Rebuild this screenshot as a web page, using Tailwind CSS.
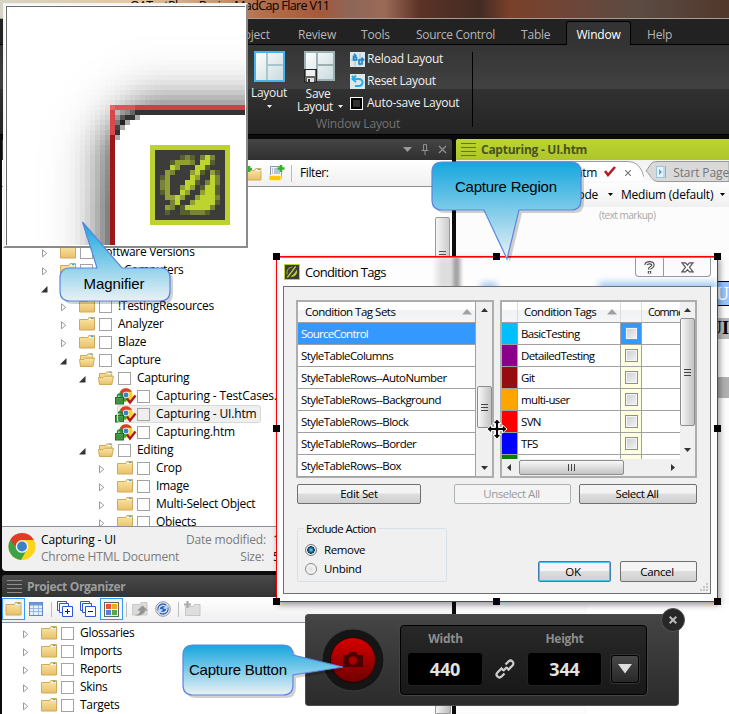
<!DOCTYPE html>
<html lang="en">
<head>
<meta charset="utf-8">
<title>MadCap Flare V11</title>
<script src="https://cdn.jsdelivr.net/npm/@tailwindcss/browser@4"></script>
</head>
<body class="relative w-[729px] h-[714px] overflow-hidden bg-[#0c0c0c] font-['Open_Sans','Noto_Sans',sans-serif] text-[12px] leading-[18px] tracking-[-0.3px] text-black">

<svg width="0" height="0" class="absolute">
  <defs>
    <linearGradient id="fg" x1="0" y1="0" x2="0" y2="1"><stop offset="0" stop-color="#fbe7a8"/><stop offset="1" stop-color="#e8c069"/></linearGradient>
    <linearGradient id="callout" x1="0" y1="0" x2="0" y2="1"><stop offset="0" stop-color="#14a6dd"/><stop offset="1" stop-color="#eaf1f5"/></linearGradient>
    <linearGradient id="red" x1="0" y1="0" x2="0" y2="1"><stop offset="0" stop-color="#d80000"/><stop offset="1" stop-color="#6e0000"/></linearGradient>
    <linearGradient id="glass" x1="0" y1="0" x2="1" y2="1"><stop offset="0" stop-color="#fff"/><stop offset="1" stop-color="#c9dadd"/></linearGradient>
    <symbol id="folder" viewBox="0 0 16 14"><path d="M.5 13V2.500h8.200l1.200-2h5.600V13z" fill="url(#fg)" stroke="#d0a95c"/><path d="M10 2.500h5" stroke="#fff"/><path d="M12 1.600h2.500" stroke="#35a8e8" stroke-width="1.200"/></symbol>
    <symbol id="open" viewBox="0 0 16 14"><path d="M1.500 13V2.500h6l1.200-1.600h5V13z" fill="#f3d689" stroke="#d0a95c"/><path d="M9.500 2.300h4" stroke="#fff"/><path d="M11 1.200h2.400" stroke="#35a8e8"/><path d="M.5 6.500h4.500l1.200 -1.300h9.300l-1.700 8.300h-12.300z" fill="url(#fg)" stroke="#d0a95c"/></symbol>
    <symbol id="chrome" viewBox="0 0 28 28"><circle cx="14" cy="14" r="13.500" fill="#ffd31a"/><path d="M2.300 7.200A13.500 13.500 0 0 0 13 27.500L19 17l-5-3z" fill="#3ba345"/><path d="M2.300 7.200A13.500 13.500 0 0 1 25.800 7.500H14q-5 0-6.500 7z" fill="#dd3b2c"/><circle cx="14" cy="14" r="6.300" fill="#f4f4f4"/><circle cx="14" cy="14" r="4.900" fill="#3d7fc9"/></symbol>
    <symbol id="file" viewBox="0 0 22 17"><svg x="4" y="0" width="14" height="14"><use href="#chrome"/></svg><path d="M2.500 10V8.500a2.500 2.500 0 0 1 5 0V10" fill="none" stroke="#2c7d32" stroke-width="1.500"/><rect x=".5" y="9.500" width="8" height="6.500" fill="#4aa14b" stroke="#226b28"/><path d="M1 12h7M1 14h7" stroke="#2c7d32" stroke-width=".7"/><path d="M12 10.500l3 4 5.500-7" fill="none" stroke="#b0181e" stroke-width="2.300"/></symbol>
    <symbol id="stack" viewBox="0 0 16 16"><g fill="#fff" stroke="#2d55d8"><path d="M.5.500h9v9h-9z"/><path d="M2.500 2.500h9v9h-9z"/><path d="M5.500 5.500h10v10h-10z"/></g></symbol>
    <symbol id="flare" viewBox="0 0 16 16"><rect x=".5" y=".5" width="15" height="15" fill="#3c3c3c" stroke="#bdd231"/><path d="M3.300 10.500C1.800 7 4.500 3.200 8.500 3" fill="none" stroke="#97a536" stroke-width="1.200"/><path d="M3.300 13.500 11.700 2.500" stroke="#bdd231" stroke-width="1.300"/><path d="M6.500 12.800C9 11 11.300 8.500 12.700 5.700 14 9 11.500 13.300 6.500 12.800z" fill="#bdd231"/></symbol>
  </defs>
</svg>

<!-- application -->
<div class="flex flex-col w-[729px] h-[714px]">
  <div class="h-[19px] shrink-0 overflow-hidden border-b border-[#a79c94] bg-[linear-gradient(90deg,#d7d4c5_0,#e2c9a0_130px,#c89670_220px,#b4714d_260px,#a5593b_320px,#8d6658_350px,#9b6a56_385px,#5b3226_420px,#432c23_480px,#7a402a_510px,#6e4638_570px,#5a4b43_640px,#52372b_729px)]">
    <div class="pl-[130px] -mt-[3px] text-[12.500px] tracking-[-0.64px] whitespace-pre">QATestPlans Basic - MadCap Flare V11</div>
  </div>
  <div class="flex h-[26px] shrink-0 items-end bg-[#222] border-b border-black text-[#b5b5b5] leading-[19px] tracking-[-0.2px]">
    <div class="w-[232px]"></div>
    <span class="w-[66px]">Project</span>
    <span class="w-[63px]">Review</span>
    <span class="w-[55px]">Tools</span>
    <span class="w-[105px] tracking-[-0.3px]">Source Control</span>
    <span class="w-[45px]">Table</span>
    <span class="w-[65px] h-[24px] -mb-px pt-[3px] text-center rounded-t-[3px] border border-b-0 border-black bg-[#333] text-white">Window</span>
    <span class="pl-[16px]">Help</span>
  </div>
  <div class="flex h-[89px] shrink-0 bg-[linear-gradient(#343434,#424242_50%,#313131_50%,#242424)] text-[#f0f0f0]">
    <div class="w-[46px] ml-[246px] pt-[6px] flex flex-col items-center text-center">
      <svg width="31" height="31" viewBox="0 0 31 31"><rect x="1" y="1" width="29" height="29" fill="url(#glass)" stroke="#45b4ee" stroke-width="2"/><path d="M13 2v27M13 14h16" stroke="#a8c6d0" stroke-width="2"/></svg>
      <span class="leading-[22px]">Layout</span>
      <svg width="5" height="4" class="mt-[1px]"><path d="M0 0h5L2.500 3z" fill="#eee"/></svg>
    </div>
    <div class="w-[54px] pt-[6px] flex flex-col items-center text-center">
      <svg width="31" height="32" viewBox="0 0 31 32"><rect x="1" y="1" width="29" height="28" fill="url(#glass)" stroke="#9db0b2" stroke-width="2"/><path d="M13 1.500v28M13 14h17" stroke="#9db0b2" stroke-width="2"/><rect x=".5" y="18.500" width="12" height="12.500" fill="#666" stroke="#222"/><rect x="2" y="19" width="9" height="6" fill="#eee"/><rect x="3" y="27" width="7" height="4" fill="#ddd"/><rect x="4" y="28" width="2" height="3" fill="#333"/></svg>
      <span class="leading-[13px] mt-[4px] -ml-[2px]">Save</span>
      <span class="leading-[13px] flex items-center gap-[5px] pl-[2px]">Layout <svg width="5" height="4"><path d="M0 0h5L2.500 3z" fill="#eee"/></svg></span>
    </div>
    <div class="ml-[4px] pt-[3px] w-[122px] tracking-[-0.25px]">
      <div class="flex h-[22px] items-center gap-[2px]"><svg width="15" height="15"><rect width="15" height="15" fill="#dbe8ec"/><path d="M5 1v13M10 1v13M1 8h13" stroke="#a9bcc4"/><path d="M3.500 3.500v4.500h3V5M4 2l2 2-2 2" fill="none" stroke="#1984cf" stroke-width="1.600"/><path d="M9 7v5h3V7.500M10.300 8.500l1.900-2.200 1.900 2.200" fill="none" stroke="#1984cf" stroke-width="1.600"/></svg><span>Reload Layout</span></div>
      <div class="flex h-[22px] items-center gap-[2px]"><svg width="15" height="15"><rect width="15" height="15" fill="#dbe8ec"/><path d="M2 2l2 2M3 5h6a3.500 3.500 0 0 1 0 7H5M6 1.500 2.500 5 6 8" fill="none" stroke="#29a9e8" stroke-width="2"/></svg><span>Reset Layout</span></div>
      <div class="flex h-[22px] items-center gap-[4px]"><span class="w-[13px] h-[13px] mt-[1px] bg-black border border-white p-[2px]"><i class="block w-full h-full bg-[#333]"></i></span><span class="whitespace-nowrap">Auto-save Layout</span></div>
      <div class="-ml-[34px] mt-[1px] w-[90px] text-[#747474] whitespace-nowrap tracking-[-0.16px]">Window Layout</div>
    </div>
    <div class="w-[1px] h-[75px] mt-[7px] bg-black"></div>
  </div>
  <div class="h-[5px] shrink-0 bg-[#0a0a0a] border-t border-black"></div>

  <div class="flex flex-1 min-h-0">
    <div class="w-[2px]"></div>
    <!-- left column -->
    <div class="w-[450px] flex flex-col">
      <div class="h-[21px] shrink-0 rounded-t-[3px] bg-[linear-gradient(#454545,#303030)] flex items-center justify-end gap-[9px] pr-[5px]">
        <svg width="9" height="6" class="mr-0"><path d="M0 0h9L4.500 5z" fill="#9a9a9a"/></svg>
        <svg width="8" height="11" fill="none" stroke="#909090"><path d="M2.500 6V.5h3V6M.5 6.500h7M4 7v4M5.500 1v5"/></svg>
        <svg width="9" height="9" stroke="#909090" stroke-width="1.300"><path d="M1 1l7 7M8 1 1 8"/></svg>
      </div>
      <div class="h-[27px] shrink-0 flex items-center border-b border-[#8d8f99] bg-[linear-gradient(#fff,#f0f0f0)] pl-[244px]">
        <svg width="16" height="16"><svg y="3" width="16" height="13"><use href="#folder"/></svg><path d="M3 1v6M0 4h6" stroke="#2fb32f" stroke-width="2.500"/></svg>
        <svg width="16" height="16" class="ml-[7px]"><path d="M1.500 1.500h11v12h-11z" fill="#f4f4f4" stroke="#8c98a4"/><path d="M3 4h1m1 0h6M3 6h1m1 0h6M3 8h1m1 0h6" stroke="#7b97b0"/><rect x="0" y="10.500" width="12" height="5" fill="#ffc40c" stroke="#fff2a0"/><path d="M12 0v7M8.500 3.500h7" stroke="#2fb32f" stroke-width="2.500"/></svg>
        <span class="w-px h-[17px] bg-[#bbb] ml-[6px] mr-[8px]"></span><span class="tracking-[-0.4px]">Filter:</span>
      </div>
      <div id="tree" class="relative h-[339px] shrink-0 overflow-hidden bg-white pt-[56px]">
        <div class="absolute right-[2px] top-[30px] w-[15px] h-[66px] border border-[#999] rounded-[2px] bg-[linear-gradient(90deg,#f5f5f5,#ccc)] flex flex-col items-center gap-[2px] pt-[33px]"><i class="w-[7px] h-px bg-[#555]"></i><i class="w-[7px] h-px bg-[#555]"></i><i class="w-[7px] h-px bg-[#555]"></i></div>
      </div>
      <div class="h-[45px] shrink-0 rounded-b-[4px] bg-[#f0f0f0] border-t border-[#8d8f99] flex pl-[6px] pt-[4px]">
        <svg width="28" height="30" class="mt-px"><use href="#chrome" width="28" height="29"/></svg>
        <div class="ml-[5px] w-[145px] shrink-0 leading-[17px]"><div class="tracking-[-0.16px]">Capturing - UI</div><div class="text-[#7b7b7b] tracking-[-0.2px] whitespace-nowrap">Chrome HTML Document</div></div>
        <div class="w-[78px] shrink-0 text-right leading-[17px] text-[#7b7b7b]"><div class="tracking-[-0.18px] whitespace-nowrap">Date modified:</div><div>Size:</div></div>
        <div class="ml-[9px] leading-[17px] whitespace-nowrap"><div>12/9</div><div>5 KB</div></div>
      </div>
      <div class="h-[4px] shrink-0"></div>
      <div class="h-[22px] shrink-0 rounded-t-[3px] bg-[linear-gradient(#4a4a4a,#333)] flex items-center pl-[5px] pt-px gap-[5px] text-[#9c9c9c] font-bold">
        <svg width="15" height="13" stroke="#8d8d8d"><path d="M0 .5h15M0 4.500h15M0 8.500h15M0 12.500h15"/></svg><span class="tracking-[-0.37px]">Project Organizer</span>
      </div>
      <div class="h-[26px] shrink-0 flex items-center bg-[linear-gradient(#fff,#efefef)] border-b border-[#8d8f99] pb-px">
        <span class="w-[23px] h-[22px] border border-[#3399ff] bg-[#f3f7fc] flex items-center justify-center"><svg width="17" height="14"><use href="#folder"/></svg></span>
        <svg width="14" height="14" class="ml-[4px]"><rect x=".5" y=".5" width="13" height="13" fill="#e6effc" stroke="#5f86c5"/><path d="M1 2h12" stroke="#6f97d6" stroke-width="3"/><path d="M1 6.500h12M1 9.500h12M4.500 3v10M9.500 3v10" stroke="#9bb8e4"/></svg>
        <span class="w-px h-[15px] bg-[#bbb] ml-[8px]"></span>
        <svg width="16" height="16" class="ml-[5px]"><use href="#stack"/><path d="M8 10.500h5M10.500 8v5" stroke="#123"/></svg>
        <svg width="16" height="16" class="ml-[7px]"><use href="#stack"/><path d="M8 10.500h5" stroke="#123"/></svg>
        <span class="w-[23px] h-[22px] ml-[4px] border border-[#3399ff] bg-[#f3f7fc] flex items-center justify-center"><svg width="15" height="15"><rect x=".5" y=".5" width="14" height="14" fill="#f4f4f4" stroke="#666"/><path d="M2 2h5v5H2z" fill="#ee4e35"/><path d="M8 2h5v5H8z" fill="#f5a81c"/><path d="M2 8h5v5H2z" fill="#4f83dd"/><path d="M8 8h5v5H8z" fill="#55ab42"/></svg></span>
        <span class="w-px h-[15px] bg-[#bbb] ml-[3px]"></span>
        <svg width="17" height="16" class="ml-[5px]"><path d="M.5 14V3.500H8l1-2h6V14z" fill="#dadada" stroke="#cacaca"/><path d="M3 14.500c4-1 5-3 5-5H5l5.500-5L16 9.500h-3c0 3-4 5.500-10 5z" fill="#959595"/></svg>
        <svg width="17" height="17" class="ml-[6px]"><circle cx="8" cy="8" r="7.300" fill="#e8e8e8" stroke="#999"/><circle cx="8" cy="8" r="5.700" fill="#2c5fc0"/><path d="M4 8a4 4 0 0 1 7-2.200M12 8a4 4 0 0 1-7 2.200M12 3.500V7H8.500M4 12.500V9h3.500" stroke="#dce9ff" stroke-width="1.400" fill="none"/></svg>
        <span class="w-px h-[15px] bg-[#bbb] ml-[6px]"></span>
        <svg width="17" height="16" class="ml-[5px]"><path d="M1.500 14.500V5.500h8l1-2h5.500v11z" fill="#dedede" stroke="#c6c6c6"/><path d="M3.500 0v7M0 3.500h7" stroke="#aaa" stroke-width="2.200"/></svg>
      </div>
      <div id="organizer" class="relative flex-1 overflow-hidden bg-white pt-[1px]">
        <div class="absolute right-[1px] bottom-0 w-[16px] h-[9px] border border-[#999] rounded-t-[2px] bg-[linear-gradient(90deg,#f5f5f5,#bbb)]"></div>
      </div>
    </div>
    <div class="w-[4px]"></div>
    <!-- document column -->
    <div class="w-[273px] flex flex-col bg-white">
      <div class="h-[21px] shrink-0 bg-[linear-gradient(#bcd52f,#aec52b)] rounded-tl-[3px] shadow-[-4px_-1px_0_#0c0c0c] flex items-center pl-[5px] gap-[5px] font-bold text-[#48531c]">
        <svg width="15" height="13" stroke="#66751f"><path d="M0 .5h15M0 4.500h15M0 8.500h15M0 12.500h15"/></svg><span class="tracking-[-0.26px]">Capturing - UI.htm</span>
      </div>
      <div class="h-[23px] shrink-0 flex bg-[linear-gradient(#f2f2f2,#fafafa)]">
        <div class="relative w-[188px] h-[23px]">
          <svg width="188" height="23" class="absolute inset-0"><path d="M-1 23V1.500H170c10 0 13 4 16 10 2 6 3 8 6 9" fill="#fff" stroke="#999"/></svg>
          <div class="relative flex items-center h-[25px] justify-end pr-[13px]">Capturing - UI.htm<svg width="12" height="11" class="ml-[7px] mb-[2px]"><path d="M1 5l3 4 7-8" fill="none" stroke="#b51c24" stroke-width="2.600"/></svg><svg width="6" height="6" class="ml-[9px]" stroke="#777" stroke-width="1.200"><path d="M0 0l6 6M6 0 0 6"/></svg></div>
        </div>
        <div class="relative w-[85px] h-[22px]">
          <svg width="85" height="23" class="absolute inset-0"><path d="M85 21.500H13C7 20 6 14 2 11 7 5 6 1.500 14 1.500h71z" fill="#d9d9d9" stroke="#999"/></svg>
          <div class="relative flex items-center h-[25px] pl-[12px] text-[#757575] whitespace-nowrap tracking-[-0.12px]"><svg width="16" height="12" class="mr-[6px] mb-[2px]"><rect x=".5" y=".5" width="15" height="11" fill="#b9dcf0" stroke="#9dc3dc"/><path d="M1 1h6v10H1z" fill="#e8f3f9"/><path d="M3 3l3 3-3 3z" fill="#5ba5cf"/><path d="M9 1h2v10H9z" fill="#78b6dc"/></svg><span class="pl-px">Start Page</span></div>
        </div>
      </div>
      <div class="h-[24px] shrink-0 flex items-center bg-[linear-gradient(#fdfdfd,#f0f0f0)] whitespace-nowrap">
        <span class="w-[142px] text-right">Layout Mode</span><svg width="5" height="4" class="ml-[10px] mr-[8px]"><path d="M0 0h5L2.500 3z"/></svg><span class="tracking-[-0.24px]">Medium (default)</span><svg width="5" height="4" class="ml-[7px]"><path d="M0 0h5L2.500 3z"/></svg>
      </div>
      <div class="relative flex-1 bg-[#fcfcfc]">
        <div class="pl-[143px] text-[10px] leading-[16px] text-[#a6a6a6] tracking-[-0.5px]">(text markup)</div>
        <div class="mt-[58px] h-[25px] bg-[#94c6fb] border-y border-black text-white font-bold text-right font-['Liberation_Serif'] text-[19px] leading-[23px] tracking-normal">U</div>
        <div class="mt-[12px] h-[21px] bg-[#b9b9b9] font-bold text-right font-['Liberation_Serif'] text-[18px] leading-[20px] tracking-normal">UI</div>
        <div class="mt-[38px] h-[21px] bg-[#b0b0b0]"></div>
        <div class="absolute left-[131px] right-0 bottom-0 h-[110px] bg-white"></div>
      </div>
    </div>
  </div>
</div>

<!-- condition tags dialog -->
<div class="absolute left-[276px] top-[256px] w-[442px] h-[346px] border border-[#f00] bg-[#fdfdfd] shadow-[2px_3px_6px_rgba(0,0,0,0.4)] flex flex-col px-[6px] text-[11.500px] tracking-[-0.36px]">
  <div class="relative h-[30px] shrink-0 flex -mx-[6px] pl-[7px] pt-[1px] border-t border-[#888] overflow-hidden">
    <div class="absolute left-[160px] top-[-2px] w-[16px] h-[34px] bg-[#ddd] blur-[3px]"></div>
    <div class="absolute left-[176px] top-[-2px] w-[7px] h-[34px] bg-[#999] blur-[2px]"></div>
    <div class="absolute left-[204px] top-[25px] w-[16px] h-[8px] bg-[#9cc4ec] blur-[3px]"></div>
    <div class="absolute left-[322px] right-0 top-[24px] h-[12px] bg-[#a4ccf5] blur-[3px]"></div>
    <svg width="16" height="16" class="mt-[5px]"><use href="#flare"/></svg>
    <span class="ml-[5px] mt-[4px] text-[13px] tracking-[-0.66px]">Condition Tags</span>
    <div class="relative ml-auto mr-[6px] -mt-px flex h-[19px] border border-t-0 border-[#999] rounded-b-[4px] bg-[#fbfbfb]">
      <div class="w-[28px] border-r border-[#999] flex items-center justify-center"><svg width="11" height="13" fill="none"><path d="M2 4C2 1 9 1 9 4S5.500 6 5.500 8.500M5.500 10v2.500" stroke="#444" stroke-width="3.400"/><path d="M2 4C2 1 9 1 9 4S5.500 6 5.500 8.500M5.500 10.500v1.500" stroke="#fff" stroke-width="1.200"/></svg></div>
      <div class="w-[46px] flex items-center justify-center"><svg width="13" height="11" fill="#fff" stroke="#555" stroke-width="1.200"><path d="M1 .8h3.500l2 2.200 2-2.200H12L8.500 5.300 12 9.800H8.500l-2-2.200-2 2.200H1l3.500-4.500z"/></svg></div>
    </div>
  </div>
  <div class="relative h-[308px] shrink-0 border border-[#707070] bg-[#f0f0f0] pt-[13px] pl-[12px] -mt-px">
    <div class="flex gap-[6px]">
      <!-- tag sets -->
      <div class="w-[198px] h-[178px] border-[2px] border-[#adadad] bg-white flex">
        <div id="sets" class="w-[178px] border-r border-[#a0a0a0]">
          <div class="h-[21px] flex items-center justify-between pl-[7px] pr-[3px] border-b border-[#a0a0a0] bg-[linear-gradient(#fff_40%,#f1f2f4_42%,#f5f6f7)] tracking-[-0.5px]">Condition Tag Sets<svg width="10" height="6"><path d="M5 0l5 5.500H0z" fill="#a0a0a0"/></svg></div>
        </div>
        <div class="flex-1 bg-[#f0f0f0] flex flex-col items-center py-[6px]">
          <svg width="7" height="4"><path d="M3.500 0 7 4H0z" fill="#333"/></svg>
          <div class="w-[15px] h-[42px] mt-[74px] rounded-[2px] border border-[#8d8d8d] bg-[linear-gradient(90deg,#f8f8f8,#dadada_55%,#c4c4c4)] flex flex-col items-center justify-center gap-[2px]"><i class="w-[7px] h-px bg-[#444]"></i><i class="w-[7px] h-px bg-[#444]"></i><i class="w-[7px] h-px bg-[#444]"></i></div>
          <svg width="7" height="4" class="mt-auto"><path d="M0 0h7L3.500 4z" fill="#333"/></svg>
        </div>
      </div>
      <!-- tags -->
      <div class="w-[197px] h-[178px] border-[2px] border-[#adadad] bg-[#f0f0f0] flex">
        <div class="w-[178px] flex flex-col">
          <div id="tags" class="h-[157px] overflow-hidden bg-white">
            <div class="h-[21px] flex items-center border-b border-[#a0a0a0] bg-[linear-gradient(#fff_40%,#f1f2f4_42%,#f5f6f7)] whitespace-nowrap">
              <span class="w-[16px] h-full border-r border-[#ddd]"></span>
              <span class="w-[103px] h-full flex items-center justify-between pl-[6px] pr-[3px] border-r border-[#ddd] tracking-[-0.52px]">Condition Tags<svg width="10" height="6"><path d="M5 0l5 5.500H0z" fill="#a0a0a0"/></svg></span>
              <span class="w-[21px] h-full border-r border-[#ddd]"></span>
              <span class="w-[38px] pl-[6px] overflow-hidden text-[11px] tracking-[-1px]">Comments</span>
            </div>
          </div>
          <div class="h-[17px] flex items-center px-[5px] bg-[#f0f0f0]">
            <svg width="4" height="7"><path d="M4 0v7L0 3.500z" fill="#333"/></svg>
            <div class="ml-[8px] w-[105px] h-[15px] rounded-[2px] border border-[#8d8d8d] bg-[linear-gradient(#f8f8f8,#dadada_55%,#c4c4c4)] flex items-center justify-center gap-[2px]"><i class="h-[7px] w-px bg-[#444]"></i><i class="h-[7px] w-px bg-[#444]"></i><i class="h-[7px] w-px bg-[#444]"></i></div>
            <svg width="4" height="7" class="ml-auto"><path d="M0 0v7l4-3.500z" fill="#333"/></svg>
          </div>
        </div>
        <div class="flex-1 h-[157px] flex flex-col items-center pt-[6px] bg-[#f0f0f0]">
          <svg width="7" height="4" class="shrink-0"><path d="M3.500 0 7 4H0z" fill="#333"/></svg>
          <div class="w-[15px] h-[108px] mt-[6px] rounded-[2px] border border-[#8d8d8d] bg-[linear-gradient(90deg,#f8f8f8,#dadada_55%,#c4c4c4)] flex flex-col items-center justify-center gap-[2px]"><i class="w-[7px] h-px bg-[#444]"></i><i class="w-[7px] h-px bg-[#444]"></i><i class="w-[7px] h-px bg-[#444]"></i></div>
          <svg width="7" height="4" class="mt-[22px] shrink-0"><path d="M0 0h7L3.500 4z" fill="#333"/></svg>
        </div>
      </div>
    </div>
    <div class="flex mt-[6px] pl-[1px] leading-[18px] text-center">
      <div class="w-[124px] h-[20px] rounded-[2px] border border-[#707070] bg-[linear-gradient(#f4f4f4_45%,#dedede_50%,#cfcfcf)]">Edit Set</div>
      <div class="w-[117px] h-[20px] ml-[33px] rounded-[2px] border border-[#adb2b5] bg-[#f4f4f4] text-[#999] tracking-[-0.5px] pr-[2px]">Unselect All</div>
      <div class="w-[118px] h-[20px] ml-[8px] rounded-[2px] border border-[#707070] bg-[linear-gradient(#f4f4f4_45%,#dedede_50%,#cfcfcf)] tracking-[-0.5px] pr-[2px]">Select All</div>
    </div>
    <fieldset class="relative w-[150px] h-[54px] ml-[1px] mt-[24px] border border-[#d5dfe5] rounded-[3px] pt-[11px] pl-[7px]">
      <div class="absolute -top-[9px] left-[6px] px-[2px] bg-[#f0f0f0] tracking-[-0.6px]">Exclude Action</div>
      <div class="flex items-center gap-[7px] h-[19px]"><span class="w-[12px] h-[12px] rounded-full border border-[#777] bg-[radial-gradient(circle,#7fd3f5_0,#16628f_2.500px,#0c3352_3.500px,#eee_4px)]"></span>Remove</div>
      <div class="flex items-center gap-[7px] h-[19px]"><span class="w-[12px] h-[12px] rounded-full border border-[#888] bg-[radial-gradient(circle,#ddd_0,#eee_3px,#fff)]"></span>Unbind</div>
    </fieldset>
    <div class="flex -mt-[21px] leading-[19px] text-center">
      <div class="w-[73px] h-[21px] ml-[242px] rounded-[2px] border border-[#3b7fb0] shadow-[inset_0_0_0_1px_#43c6f2] bg-[linear-gradient(#f4f4f4_45%,#dedede_50%,#cfcfcf)] pr-[3px]">OK</div>
      <div class="w-[77px] h-[21px] ml-[9px] rounded-[2px] border border-[#707070] bg-[linear-gradient(#f4f4f4_45%,#dedede_50%,#cfcfcf)] pr-[3px]">Cancel</div>
    </div>
    <svg width="9" height="9" class="absolute right-[1px] bottom-[1px]" fill="#c4c4c4"><path d="M6 0h2v2H6zM3 3h2v2H3zM6 3h2v2H6zM0 6h2v2H0zM3 6h2v2H3zM6 6h2v2H6z"/></svg>
  </div>
</div>
<!-- region handles -->
<div class="absolute left-[273px] top-[253px] w-[448px] h-[352px] grid grid-cols-3 justify-between content-between">
  <i class="w-[7px] h-[7px] bg-black"></i><i class="w-[7px] h-[7px] bg-black justify-self-center"></i><i class="w-[7px] h-[7px] bg-black justify-self-end"></i>
  <i class="w-[7px] h-[7px] bg-black"></i>
  <svg width="20" height="20" viewBox="0 0 20 20" class="justify-self-center -my-[6px]"><path d="M10 0l4 4.500h-2.500v4h4V6L20 10l-4.500 4v-2.500h-4v4H14L10 20l-4-4.500h2.500v-4h-4V14L0 10l4.500-4v2.500h4v-4H6z" fill="#000" stroke="#fff" stroke-width="1"/></svg>
  <i class="w-[7px] h-[7px] bg-black justify-self-end"></i>
  <i class="w-[7px] h-[7px] bg-black"></i><i class="w-[7px] h-[7px] bg-black justify-self-center"></i><i class="w-[7px] h-[7px] bg-black justify-self-end"></i>
</div>

<!-- capture toolbar -->
<div class="absolute left-[305px] top-[614px] w-[374px] h-[92px] rounded-[3px] border border-[#4d4d4d] bg-[linear-gradient(#454545,#2b2b2b)] flex items-center">
  <svg width="64" height="64" class="ml-[15px]"><circle cx="32" cy="32" r="31" fill="#151515" stroke="#3c3c3c"/><circle cx="32" cy="32" r="22.500" fill="url(#red)" stroke="#250000"/><path d="M22 27h5l2-3h6l2 3h5v12H22z" fill="#4c0000"/><circle cx="32" cy="32.500" r="4.200" fill="#a40000"/></svg>
  <div class="ml-[15px] w-[247px] h-[70px] rounded-[4px] border border-black bg-[linear-gradient(#282828,#181818)] shadow-[0_0_0_1px_#444] flex items-end pb-[8px] pl-[6px] font-bold text-center">
    <div class="w-[76px]"><div class="text-[#8d8d8d] leading-[18px] mb-[4px] tracking-[-0.3px] pl-px">Width</div><div class="h-[34px] rounded-[4px] bg-black border border-[#222] text-[#e2e2e2] text-[18px] leading-[33px] tracking-[-0.1px]">440</div></div>
    <svg width="20" height="20" class="mx-[12px] mb-[7px]" fill="none" stroke="#ccc" stroke-width="2.300"><path d="M8.500 11.500 6.500 9.500 2.500 13.500a2.600 2.600 0 0 0 4 4l3-3M11.500 8.500l2 2 4-4a2.600 2.600 0 0 0-4-4l-3 3M8 12l4-4"/></svg>
    <div class="w-[75px]"><div class="text-[#8d8d8d] leading-[18px] mb-[4px] tracking-[-0.3px]">Height</div><div class="h-[34px] rounded-[4px] bg-black border border-[#222] text-[#e2e2e2] text-[18px] leading-[33px] tracking-[-0.1px]">344</div></div>
    <div class="ml-[9px] mb-[3px] w-[28px] h-[28px] rounded-[3px] border border-black shadow-[0_0_0_1px_#333] bg-[linear-gradient(#484848,#282828)] flex items-center justify-center"><svg width="14" height="10"><path d="M0 0h14L7 9.500z" fill="#dcdcdc"/></svg></div>
  </div>
</div>
<div class="absolute left-[661px] top-[608px] w-[24px] h-[24px] rounded-full border border-[#555] bg-[#272727] flex items-center justify-center"><svg width="8" height="8" stroke="#bbb" stroke-width="2"><path d="M.7.700l6.600 6.600M7.300.700.700 7.300"/></svg></div>

<!-- magnifier -->
<div class="absolute left-[3px] top-[3px] w-[245px] h-[245px] border-2 border-t-[#f4f4f4] border-l-[#f4f4f4] border-r-[#8a8a8a] border-b-[#8a8a8a] bg-white">
  <div class="m-px w-[239px] h-[239px] border-t border-l border-[#696969] overflow-hidden"><svg id="lens" width="238" height="238" viewBox="7 7 238 238" shape-rendering="crispEdges"></svg></div>
</div>

<!-- callouts -->
<svg class="absolute left-0 top-0 pointer-events-none" width="729" height="714" font-family="Liberation Sans, sans-serif" font-size="15" letter-spacing="0">
  <g fill="#000" opacity=".18" transform="translate(3 3)">
    <path d="M442 162h129q10 0 10 10v28q0 10-10 10h-52l-12 49-23-49h-42q-10 0-10-10v-28q0-10 10-10z"/>
    <path d="M70 268h27L82.500 222 122 268h38q10 0 10 10v13q0 10-10 10H70q-10 0-10-10v-13q0-10 10-10z"/>
    <path d="M193 645h90q10 0 10 10l50 12-50 8v10q0 10-10 10h-90q-10 0-10-10v-30q0-10 10-10z"/>
  </g>
  <g fill="url(#callout)" stroke="#5b85e0" stroke-width="1.200">
    <path d="M442 162h129q10 0 10 10v28q0 10-10 10h-52l-12 49-23-49h-42q-10 0-10-10v-28q0-10 10-10z"/>
    <path d="M70 268h27L82.500 222 122 268h38q10 0 10 10v13q0 10-10 10H70q-10 0-10-10v-13q0-10 10-10z"/>
    <path d="M193 645h90q10 0 10 10l50 12-50 8v10q0 10-10 10h-90q-10 0-10-10v-30q0-10 10-10z"/>
  </g>
  <text x="455" y="192" textLength="102">Capture Region</text>
  <text x="83.500" y="289" textLength="61">Magnifier</text>
  <text x="189" y="675" textLength="98">Capture Button</text>
</svg>

<script>
const arrow = o => o === null ? '' : o
  ? '<svg width="7" height="7" class="mt-[2px]"><path d="M6.500 0v6.500H0z" fill="#333"/></svg>'
  : '<svg width="6" height="9" class="ml-[1px] mt-[2px]"><path d="M.5.800v7L4.800 4.300z" fill="#fff" stroke="#999"/></svg>';
function row(x, kind, label) {
  const file = kind === 'file';
  const icon = file ? '<svg width="22" height="17" class="-ml-[2px] shrink-0"><use href="#file"/></svg>'
    : `<svg width="16" height="14" class="mr-[4px] shrink-0"><use href="#${kind}"/></svg>`;
  const sel = label === 'Capturing - UI.htm';
  return `<div class="flex h-[18px] items-center whitespace-nowrap" style="padding-left:${x}px">
    <span class="w-[19px] shrink-0 flex">${arrow(file ? null : kind === 'open')}</span>
    <span class="flex h-[18px] items-center ${file ? 'tracking-[-0.14px]' : ''} ${sel ? 'rounded-[3px] bg-[#efefef] outline outline-[#dadada] outline-offset-[-1px] pr-[4px]' : ''}">${icon}<span class="w-[13px] h-[13px] shrink-0 mr-[6px] border border-[#a3a3a3] ${sel ? 'bg-[#efefef]' : 'bg-white'}"></span>${label}</span></div>`;
}
const B = 39;
document.getElementById('tree').insertAdjacentHTML('beforeend', [
  [0,'folder','Software Versions'],[0,'folder','Test Computers'],[0,'open','Topics'],[1,'folder','!TestingResources'],[1,'folder','Analyzer'],
  [1,'folder','Blaze'],[1,'open','Capture'],[2,'open','Capturing'],[3,'file','Capturing - TestCases.htm'],[3,'file','Capturing - UI.htm'],
  [3,'file','Capturing.htm'],[2,'open','Editing'],[3,'folder','Crop'],[3,'folder','Image'],[3,'folder','Multi-Select Object'],[3,'folder','Objects']
].map(([l,k,t]) => row(B + 19*l, k, t)).join(''));
document.getElementById('organizer').insertAdjacentHTML('beforeend',
  ['Glossaries','Imports','Reports','Skins','Targets'].map(t => row(20, 'folder', t)).join(''));

document.getElementById('sets').insertAdjacentHTML('beforeend',
  ['SourceControl','StyleTableColumns','StyleTableRows--AutoNumber','StyleTableRows--Background','StyleTableRows--Block','StyleTableRows--Border','StyleTableRows--Box']
  .map((t,i) => `<div class="${i ? '' : 'bg-[#3399ff] text-white'} h-[22px] leading-[21px] pl-[3px] border-b border-[#a0a0a0] ${i ? 'tracking-[-0.57px]' : 'tracking-[-0.75px]'}">${t}</div>`).join(''));
document.getElementById('tags').insertAdjacentHTML('beforeend',
  [['#00bfff','BasicTesting'],['#8b008b','DetailedTesting'],['#960d10','Git'],['#ffa500','multi-user'],['#ff0000','SVN'],['#0000ff','TFS'],['#008000','Other']]
  .map(([c,t],i) => `<div class="flex h-[22px] leading-[21px] border-b border-[#a0a0a0]"><span class="w-[16px] border-r border-[#a0a0a0]" style="background:${c}"></span><span class="w-[103px] pl-[3px] border-r border-[#a0a0a0] tracking-[-0.65px]">${t}</span><span class="w-[21px] border-r border-[#a0a0a0] flex items-center justify-center ${i ? 'bg-[#ffffe1]' : 'bg-[#3399ff]'}"><span class="w-[13px] h-[13px] border border-[#8e8f8f] bg-[linear-gradient(135deg,#c9ccd2,#f5f5f5)] shadow-[inset_0_0_0_1px_#f4f4f4]"></span></span></div>`).join(''));

// magnified corner, five screen pixels per sample
let out = '';
const cell = (x,y,c,w=5,h=5) => { out += `<rect x="${x}" y="${y}" width="${w}" height="${h}" fill="${c}"/>`; };
for (let y = 5; y < 245; y += 5) for (let x = 5; x < 245; x += 5) {
  if (x >= 110 && y >= 105) continue;
  const dx = Math.max(0, 165 - x), dy = Math.max(0, 160 - y);
  const d = Math.max(0, Math.hypot(dx, dy) - 58) / 5;
  const side = Math.min(1, Math.max(0, (y - 95) / 110));
  const v = Math.round(255 - (90 + 42 * side) * Math.exp(-Math.pow(d / 4, 1.3)));
  cell(x, y, `rgb(${v},${v},${v})`);
}
cell(110,105,'#c74347',135,5);
cell(110,105,'#ea6262',5,5);
cell(115,105,'#d9565a',20,5);
cell(110,110,'#d9474b',5,25);
cell(110,135,'#9d171a',5,110);
cell(115,110,'#fff',20,30);
cell(135,110,'#333',110,5);
[[115,110,'#bbb'],[120,110,'#999'],[125,110,'#888'],[130,110,'#666'],[115,115,'#999'],[120,115,'#555'],[125,115,'#333'],[130,115,'#333'],[135,115,'#aaa'],
 [115,120,'#777'],[120,120,'#222'],[125,120,'#aaa'],[115,125,'#444'],[120,125,'#aaa'],[115,130,'#333'],[115,135,'#aaa']].forEach(a => cell(...a));
cell(150,145,'#bdd231',80,80);
cell(155,150,'#3c3c3c',70,70);
// one character per sample, 1 (faint) to 4 (full)
const shade = {1:'#59602f',2:'#79843a',3:'#929f36',4:'#bdd42f'};
['................',
 '................',
 '......121.242...',
 '....13332.441...',
 '....43...441....',
 '...32...341.31..',
 '..13....43..42..',
 '..23...441.242..',
 '..23..343.1441..',
 '..13..43..3441..',
 '...3343..34442..',
 '....24..344441..',
 '...32.1444442...',
 '...1..112221....'].forEach((r,j) =>
  [...r].forEach((c,i) => { if (shade[c]) cell(150 + i*5, 145 + j*5, shade[c]); }));
document.getElementById('lens').innerHTML = out;
</script>
</body>
</html>
